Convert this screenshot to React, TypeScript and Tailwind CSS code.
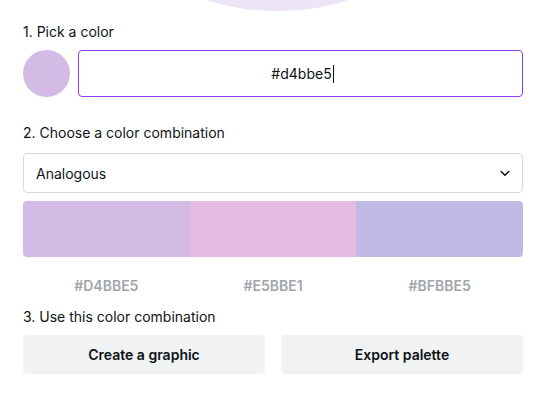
import React from "react";

const swatches = [
  { color: "#d4bbe5", label: "#D4BBE5" },
  { color: "#e5bbe1", label: "#E5BBE1" },
  { color: "#bfbbe5", label: "#BFBBE5" },
];

export default function App() {
  return (
    <div
      className="w-[533px] h-[400px] bg-white overflow-hidden text-[#0d1216]"
      style={{ fontFamily: "Inter, 'Noto Sans', sans-serif" }}
    >
      <div className="h-[11px] overflow-hidden flex justify-center">
        <div className="w-[205px] h-[80px] shrink-0 rounded-[50%] bg-[#ede4f6] -mt-[69px] ml-[22px]" />
      </div>
      <div className="ml-[23px] w-[500px]">
        <div className="mt-[11px] text-[14px] leading-5">1. Pick a color</div>
        <div className="mt-2 flex gap-2 h-[47px]">
          <div className="w-[47px] h-[47px] rounded-full bg-[#d4bbe5] shrink-0" />
          <div className="flex-1 border-[1.5px] border-[#8b3dff] rounded-[4px] flex items-center justify-center text-[14px] pl-1">
            <span>#d4bbe5</span>
            <span className="inline-block w-px h-[18px] bg-[#0d1216] ml-px" />
          </div>
        </div>
        <div className="mt-[26px] text-[14px] leading-5">2. Choose a color combination</div>
        <div className="mt-[10px] h-[40px] border border-[#d8d9dc] rounded-[4px] flex items-center justify-between pl-3 pr-[12px] text-[14px]">
          <span>Analogous</span>
          <svg width="10" height="7" viewBox="0 0 10 7" fill="none">
            <path d="M1.2 1.5 L5 5.2 L8.8 1.5" stroke="#0d1216" strokeWidth="1.5" strokeLinecap="round" strokeLinejoin="round" />
          </svg>
        </div>
        <div className="mt-2 h-[56px] rounded-[4px] overflow-hidden grid grid-cols-3">
          {swatches.map((s) => (
            <div key={s.label} style={{ backgroundColor: s.color }} />
          ))}
        </div>
        <div className="mt-[19px] grid grid-cols-3 text-[14px] leading-5 font-semibold text-[#a1a5ab]">
          {swatches.map((s) => (
            <div key={s.label} className="text-center">
              {s.label}
            </div>
          ))}
        </div>
        <div className="mt-[11px] text-[14px] leading-5">3. Use this color combination</div>
        <div className="mt-2 grid grid-cols-2 gap-4">
          <button className="h-[39px] rounded-[4px] bg-[#f1f2f4] text-[14px] font-semibold">Create a graphic</button>
          <button className="h-[39px] rounded-[4px] bg-[#f1f2f4] text-[14px] font-semibold">Export palette</button>
        </div>
      </div>
    </div>
  );
}
